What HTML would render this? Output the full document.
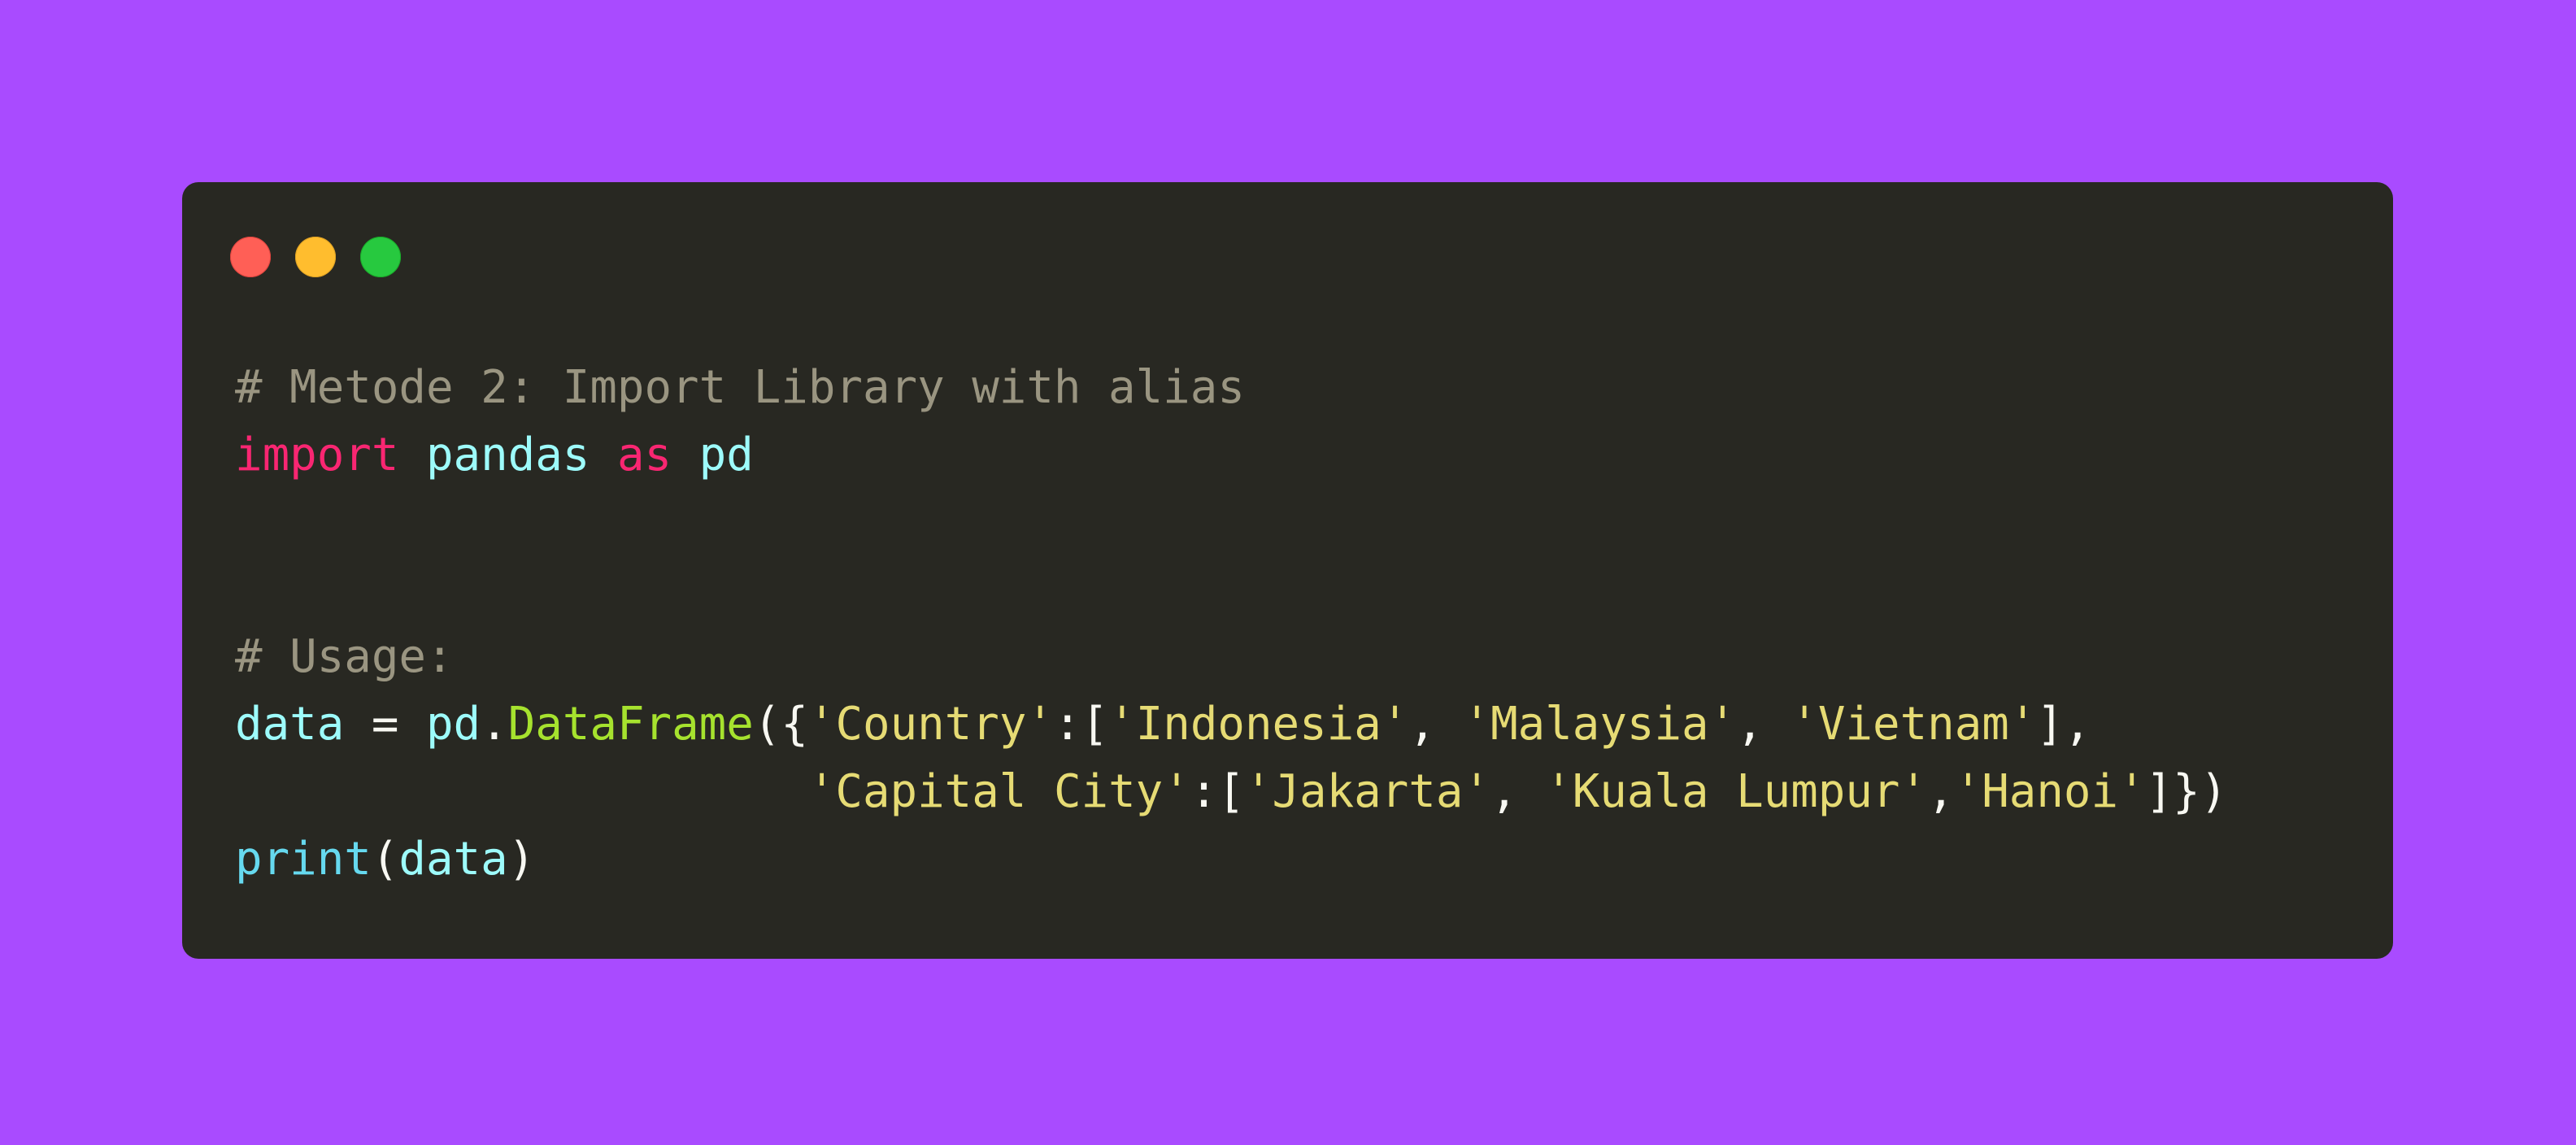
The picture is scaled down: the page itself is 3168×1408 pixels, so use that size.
<!DOCTYPE html>
<html><head><meta charset="utf-8"><style>
html,body{margin:0;padding:0}
body{width:3168px;height:1408px;background:#A94BFF;position:relative;overflow:hidden}
.card{position:absolute;left:224px;top:224px;width:2719px;height:955px;background:#282822;border-radius:20px}
.dot{position:absolute;top:291px;width:50px;height:50px;border-radius:50%}
pre{position:absolute;left:289px;top:436px;margin:0;font-family:"DejaVu Sans Mono","Liberation Mono",monospace;font-size:55.75px;line-height:82.8px;color:#F8F8F2;white-space:pre}
.c{color:#9A9581}.k{color:#F92672}.v{color:#9DFBFB}.f{color:#A6E22E}.s{color:#E6DB74}.b{color:#66D9EF}
</style></head><body>
<div class="card"></div>
<div class="dot" style="left:283px;background:#FF5F56;box-shadow:inset 0 0 0 1px #e0443e"></div>
<div class="dot" style="left:363px;background:#FFBD2E;box-shadow:inset 0 0 0 1px #dea123"></div>
<div class="dot" style="left:443px;background:#27C93F;box-shadow:inset 0 0 0 1px #1aab29"></div>
<pre><span class="c"># Metode 2: Import Library with alias</span>
<span class="k">import</span> <span class="v">pandas</span> <span class="k">as</span> <span class="v">pd</span>


<span class="c"># Usage:</span>
<span class="v">data</span> = <span class="v">pd</span>.<span class="f">DataFrame</span>({<span class="s">'Country'</span>:[<span class="s">'Indonesia'</span>, <span class="s">'Malaysia'</span>, <span class="s">'Vietnam'</span>],
                     <span class="s">'Capital City'</span>:[<span class="s">'Jakarta'</span>, <span class="s">'Kuala Lumpur'</span>,<span class="s">'Hanoi'</span>]})
<span class="b">print</span>(<span class="v">data</span>)</pre>
</body></html>
